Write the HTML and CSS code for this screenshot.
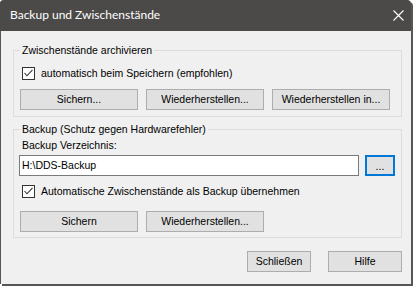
FILE: index.html
```html
<!DOCTYPE html>
<html lang="de">
<head>
<meta charset="utf-8">
<title>Backup und Zwischenstände</title>
<link rel="stylesheet" href="styles.css">
</head>
<body>
<div class="window">
  <div class="titlebar">
    <span class="title">Backup und Zwischenstände</span>
    <svg class="close" width="11" height="11" viewBox="0 0 11 11"><path d="M0.5 0.5 L10.5 10.5 M10.5 0.5 L0.5 10.5" stroke="#ffffff" stroke-width="1.1" fill="none"/></svg>
  </div>
  <div class="content">
    <fieldset class="group g1">
      <legend>Zwischenstände archivieren</legend>
      <label class="check">
        <span class="box"><svg width="11" height="11" viewBox="0 0 11 11"><path d="M1.5 5 L4 7.8 L9.5 1.8" stroke="#333" stroke-width="1.1" fill="none"/></svg></span>
        <span>automatisch beim Speichern (empfohlen)</span>
      </label>
      <div class="btnrow">
        <button class="btn">Sichern...</button>
        <button class="btn">Wiederherstellen...</button>
        <button class="btn">Wiederherstellen in...</button>
      </div>
    </fieldset>
    <fieldset class="group g2">
      <legend>Backup (Schutz gegen Hardwarefehler)</legend>
      <div class="fieldlabel">Backup Verzeichnis:</div>
      <div class="pathrow">
        <div class="input">H:\DDS-Backup</div>
        <button class="btn browse">...</button>
      </div>
      <label class="check check2">
        <span class="box"><svg width="11" height="11" viewBox="0 0 11 11"><path d="M1.5 5 L4 7.8 L9.5 1.8" stroke="#333" stroke-width="1.1" fill="none"/></svg></span>
        <span>Automatische Zwischenstände als Backup übernehmen</span>
      </label>
      <div class="btnrow btnrow2">
        <button class="btn">Sichern</button>
        <button class="btn">Wiederherstellen...</button>
      </div>
    </fieldset>
    <div class="footer">
      <button class="btn close-btn">Schließen</button>
      <button class="btn help-btn">Hilfe</button>
    </div>
  </div>
</div>
</body>
</html>
```
FILE: styles.css
```css
* { box-sizing: border-box; }
html, body {
  margin: 0;
  padding: 0;
  background: #ffffff;
}
body {
  width: 415px;
  height: 286px;
  overflow: hidden;
  font-family: "Liberation Sans", Arial, sans-serif;
  font-size: 10.5px;
  color: #000;
}
.window {
  width: 411px;
  height: 284px;
  background: #f0f0f0;
  border-left: 1px solid #565656;
  border-radius: 4px 4px 0 0;
  box-shadow: 2px 2px 0 0 #565656;
  display: flex;
  flex-direction: column;
}
.titlebar {
  height: 31px;
  background: #4b4a48;
  border-radius: 4px 4px 0 0;
  margin-left: -1px;
  padding-left: 10px;
  padding-right: 6px;
  display: flex;
  align-items: center;
  justify-content: space-between;
  flex-shrink: 0;
}
.title {
  font-family: Lato, "Noto Sans", sans-serif;
  font-size: 12px;
  color: #ffffff;
  line-height: 16px;
  margin-top: -1px;
}
.close {
  display: block;
  margin-right: 1px;
  margin-top: -1px;
}
.content {
  flex: 1;
  padding: 13px 9px 0 12px;
  display: flex;
  flex-direction: column;
}
.group {
  margin: 0;
  padding: 0 6px 6px 6px;
  border: 1px solid #dcdcdc;
  min-width: 0;
  width: 389px;
}
.group legend {
  padding: 0 2px;
  line-height: 13px;
  font-size: 10.5px;
}
.g2 {
  margin-top: 6px;
  padding-bottom: 5px;
}
.check {
  display: flex;
  align-items: center;
  height: 13px;
  margin-top: 10px;
  margin-left: 2px;
  line-height: 13px;
}
.check2 {
  margin-top: 9px;
}
.box {
  width: 13px;
  height: 13px;
  border: 1px solid #333333;
  background: #ffffff;
  display: flex;
  align-items: center;
  justify-content: center;
  margin-right: 6px;
  flex-shrink: 0;
}
.box svg { display: block; }
.btnrow {
  display: flex;
  gap: 8px;
  margin-top: 9px;
}
.btnrow2 {
  margin-top: 13px;
}
.btn {
  font-family: "Liberation Sans", Arial, sans-serif;
  font-size: 10.5px;
  color: #000;
  background: #e1e1e1;
  border: 1px solid #adadad;
  height: 21px;
  width: 118px;
  padding: 0;
  margin: 0;
  line-height: 19px;
  text-align: center;
  border-radius: 0;
}
.fieldlabel {
  margin-top: 3px;
  margin-left: 2px;
  line-height: 13px;
}
.pathrow {
  display: flex;
  gap: 6px;
  margin-top: 3px;
  margin-left: -1px;
}
.input {
  width: 340px;
  height: 21px;
  background: #ffffff;
  border: 1px solid #7a7a7a;
  padding-left: 2px;
  line-height: 19px;
}
.browse {
  width: 30px;
  border: 2px solid #0078d7;
  line-height: 19px;
}
.footer {
  display: flex;
  justify-content: flex-end;
  gap: 17px;
  margin-top: 13px;
  padding-right: 0;
}
.close-btn { width: 64px; }
.help-btn { width: 74px; }
```
